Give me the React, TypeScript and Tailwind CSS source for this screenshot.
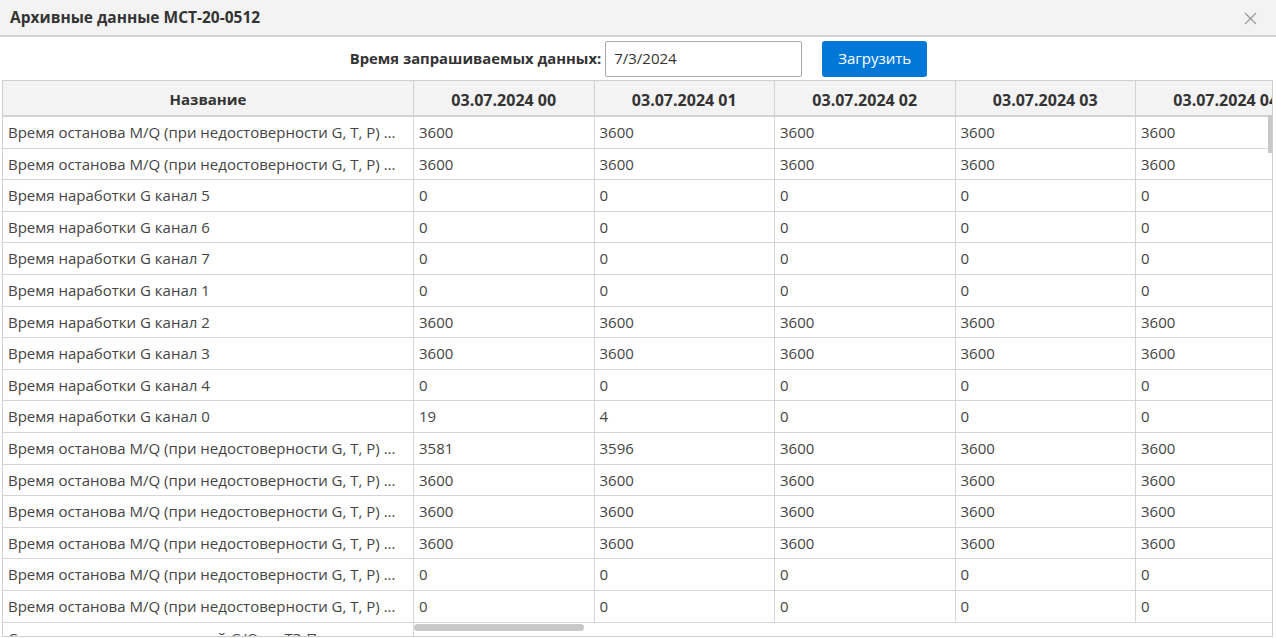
import React from "react";

const LONG = "Время останова M/Q (при недостоверности G, T, P) ...";

type Row = { name: string; v: (string | number)[] };

const rows: Row[] = [
  { name: LONG, v: [3600, 3600, 3600, 3600, 3600] },
  { name: LONG, v: [3600, 3600, 3600, 3600, 3600] },
  { name: "Время наработки G канал 5", v: [0, 0, 0, 0, 0] },
  { name: "Время наработки G канал 6", v: [0, 0, 0, 0, 0] },
  { name: "Время наработки G канал 7", v: [0, 0, 0, 0, 0] },
  { name: "Время наработки G канал 1", v: [0, 0, 0, 0, 0] },
  { name: "Время наработки G канал 2", v: [3600, 3600, 3600, 3600, 3600] },
  { name: "Время наработки G канал 3", v: [3600, 3600, 3600, 3600, 3600] },
  { name: "Время наработки G канал 4", v: [0, 0, 0, 0, 0] },
  { name: "Время наработки G канал 0", v: [19, 4, 0, 0, 0] },
  { name: LONG, v: [3581, 3596, 3600, 3600, 3600] },
  { name: LONG, v: [3600, 3600, 3600, 3600, 3600] },
  { name: LONG, v: [3600, 3600, 3600, 3600, 3600] },
  { name: LONG, v: [3600, 3600, 3600, 3600, 3600] },
  { name: LONG, v: [0, 0, 0, 0, 0] },
  { name: LONG, v: [0, 0, 0, 0, 0] },
  { name: "Суммарное время нештатной G/Q по ТЭ П ...", v: ["", "", "", "", ""] },
];

const headers = [
  "03.07.2024 00",
  "03.07.2024 01",
  "03.07.2024 02",
  "03.07.2024 03",
  "03.07.2024 04",
];

export default function App() {
  return (
    <div className="w-[1276px] h-[638px] bg-white overflow-hidden relative font-['Open_Sans',sans-serif] text-[#333]">
      {/* Title bar */}
      <div className="h-[37px] bg-[#f3f3f3] border-b-2 border-[#d2d2d2] flex items-center justify-between pl-[10px] pr-[19px]">
        <span className="font-bold text-[15.5px] leading-none">Архивные данные МСТ-20-0512</span>
        <svg width="13" height="13" viewBox="0 0 13 13" className="mt-[1px]">
          <path d="M1 1 L12 12 M12 1 L1 12" stroke="#9a9a9a" strokeWidth="1.3" />
        </svg>
      </div>

      {/* Toolbar */}
      <div className="h-[43px] flex items-center justify-center pl-[1px]">
        <span className="font-bold text-[14.8px] mr-[4px] whitespace-nowrap">Время запрашиваемых данных:</span>
        <div className="w-[197px] h-[36px] border border-[#a8a8a8] rounded-[2px] flex items-center pl-[8px] text-[15px] text-[#333]">
          7/3/2024
        </div>
        <button className="ml-[20px] w-[105px] h-[36px] bg-[#0078d7] rounded-[3px] text-white text-[15px] flex items-center justify-center">
          Загрузить
        </button>
      </div>

      {/* Table */}
      <div className="relative ml-[2px] w-[1271px] h-[557px] border border-[#cfcfcf] overflow-hidden">
        <div className="w-[1400px]">
          {/* Header */}
          <div className="flex h-[36px] bg-[#f3f3f3] border-b-2 border-[#d2d2d2]">
            <div className="w-[411px] shrink-0 border-r border-[#d2d2d2] flex items-center justify-center pt-[3px] font-bold text-[15px]">
              Название
            </div>
            {headers.map((h) => (
              <div
                key={h}
                className="w-[180.5px] shrink-0 border-r border-[#d2d2d2] flex items-center justify-center pt-[3px] font-bold text-[16px] whitespace-nowrap"
              >
                {h}
              </div>
            ))}
          </div>
          {/* Body */}
          {rows.map((r, i) => (
            <div key={i} className="flex h-[31.6px] border-b border-[#d6d6d6]">
              <div className="w-[411px] shrink-0 border-r border-[#d6d6d6] flex items-center pl-[5px] text-[15px] text-[#444] whitespace-nowrap overflow-hidden">
                {r.name}
              </div>
              {r.v.map((v, j) => (
                <div
                  key={j}
                  className="w-[180.5px] shrink-0 border-r border-[#d6d6d6] flex items-center pl-[5px] text-[15px] text-[#444]"
                >
                  {v}
                </div>
              ))}
            </div>
          ))}
        </div>

        {/* horizontal scrollbar track (over scrollable columns) */}
        <div className="absolute left-[411px] right-0 bottom-0 h-[13px] bg-white">
          <div className="absolute left-0 top-[1px] w-[170px] h-[7px] rounded-[4px] bg-[#c8c8c8]" />
        </div>
        {/* vertical scrollbar thumb */}
        <div className="absolute right-0 top-[34px] w-[4px] h-[38px] bg-[#c8c8c8]" />
      </div>
    </div>
  );
}
